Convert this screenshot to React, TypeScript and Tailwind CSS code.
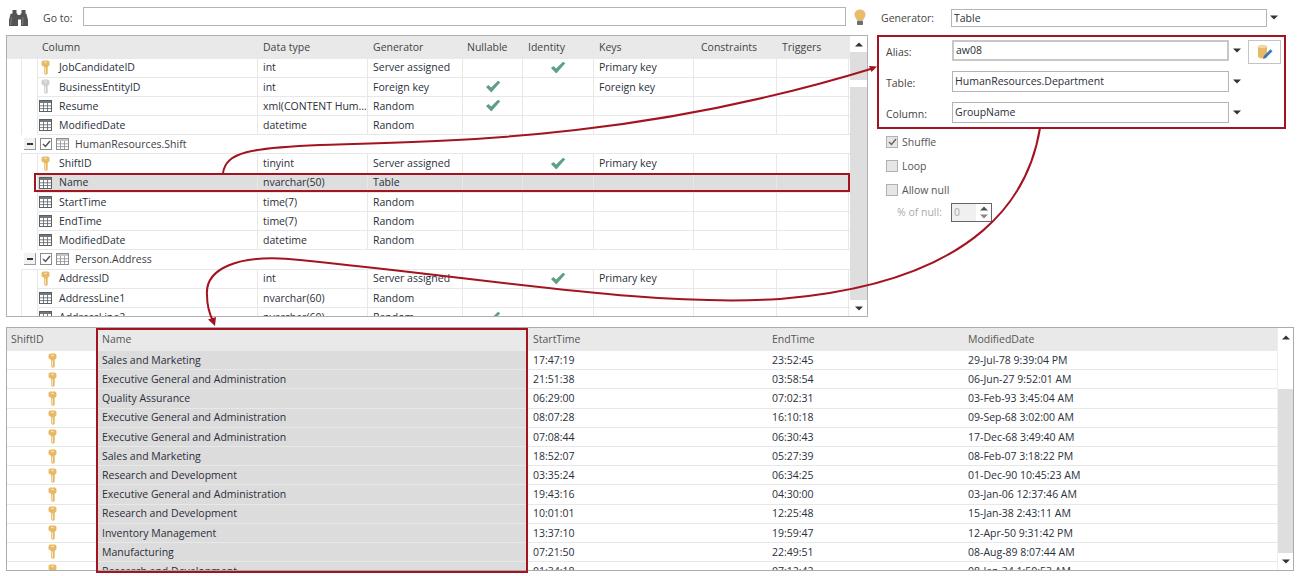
import React from "react";

const RED = "#a31420";

function Key({ color = "#e8b965" }: { color?: string }) {
  return (
    <svg width="9" height="15" viewBox="0 0 10 17" className="shrink-0">
      <path d="M2 0.500h6l1.500 1.500v4L7.500 8v7.500L5.500 17 3.500 15.500l0-7.500L0.500 6V2z" fill={color} />
      <rect x="3.500" y="2" width="3" height="1.600" fill="#fff" opacity="0.55" />
      <path d="M5 8.500v7" stroke="#fff" strokeWidth="0.9" opacity="0.8" />
    </svg>
  );
}

function TableIcon({ light = false }: { light?: boolean }) {
  const c = light ? "#8a8f93" : "#5a6166";
  return (
    <svg width="13" height="12" viewBox="0 0 13 12" className="shrink-0">
      <rect x="0.500" y="0.500" width="12" height="11" fill="#fff" stroke={c} />
      <rect x="0.500" y="0.500" width="12" height="2.500" fill={c} opacity={light ? 0.5 : 0.85} />
      <path d="M4.500 3v8M8.500 3v8M1 5.800h11M1 8.600h11" stroke={c} strokeWidth="0.8" />
    </svg>
  );
}

function Check() {
  return (
    <svg width="16" height="13" viewBox="0 0 16 13">
      <path d="M1 7l2.500-2 2.600 2.600L13 0.800l2.300 1.400L6.300 12.400z" fill="#5f9f88" />
    </svg>
  );
}

function Caret({ up = false, color = "#333" }: { up?: boolean; color?: string }) {
  return (
    <svg width="8" height="5" viewBox="0 0 8 5">
      <path d={up ? "M4 0.500L8 4.500H0z" : "M0 0.500h8L4 4.500z"} fill={color} />
    </svg>
  );
}

function Bulb() {
  return (
    <svg width="12" height="17" viewBox="0 0 12 17">
      <path d="M6 0.500c3 0 5.500 2.200 5.500 5.200 0 2.300-1.700 3.500-2.300 5.300H2.800C2.200 9.200 0.500 8 0.500 5.700 0.500 2.700 3 0.500 6 0.500z" fill="#eabb68" />
      <rect x="3" y="11.500" width="6" height="4.500" rx="0.800" fill="#6e6e6e" />
    </svg>
  );
}

function Binoculars() {
  return (
    <svg width="20" height="16" viewBox="0 0 20 16" className="shrink-0">
      <path d="M3.500 0h4v3.500h1V5h3V3.500h1V0h4v3.500l1 .5 1.500 6v6h-7V9.500h-3V16H0v-6l1.500-6 2-.5z" fill="#545454" />
      <path d="M2.500 7L1.500 15" stroke="#8a8a8a" strokeWidth="0.800" />
      <path d="M14 7L13.500 15" stroke="#8a8a8a" strokeWidth="0.800" />
    </svg>
  );
}

function DbEdit() {
  return (
    <svg width="16" height="16" viewBox="0 0 16 16">
      <path d="M1 2.500v10c0 1 1.800 1.800 4.500 1.800s4.500-.8 4.500-1.800v-10z" fill="#e8b965" />
      <ellipse cx="5.500" cy="2.500" rx="4.500" ry="1.700" fill="#f3d7a2" />
      <path d="M6 15l.8-3L13.500 5.300l2 2L8.800 14z" fill="#3b78b5" />
    </svg>
  );
}

type Mark = "gold" | "gray" | "table";
type Row = { n: string; m: Mark; t: string; g: string; nu?: boolean; id?: boolean; k?: string; sel?: boolean };
type Item = Row | { group: string };

const items: Item[] = [
  { n: "JobCandidateID", m: "gold", t: "int", g: "Server assigned", id: true, k: "Primary key" },
  { n: "BusinessEntityID", m: "gray", t: "int", g: "Foreign key", nu: true, k: "Foreign key" },
  { n: "Resume", m: "table", t: "xml(CONTENT Hum...", g: "Random", nu: true },
  { n: "ModifiedDate", m: "table", t: "datetime", g: "Random" },
  { group: "HumanResources.Shift" },
  { n: "ShiftID", m: "gold", t: "tinyint", g: "Server assigned", id: true, k: "Primary key" },
  { n: "Name", m: "table", t: "nvarchar(50)", g: "Table", sel: true },
  { n: "StartTime", m: "table", t: "time(7)", g: "Random" },
  { n: "EndTime", m: "table", t: "time(7)", g: "Random" },
  { n: "ModifiedDate", m: "table", t: "datetime", g: "Random" },
  { group: "Person.Address" },
  { n: "AddressID", m: "gold", t: "int", g: "Server assigned", id: true, k: "Primary key" },
  { n: "AddressLine1", m: "table", t: "nvarchar(60)", g: "Random" },
  { n: "AddressLine2", m: "table", t: "nvarchar(60)", g: "Random", nu: true },
];

const data = [
  ["Sales and Marketing", "17:47:19", "23:52:45", "29-Jul-78 9:39:04 PM"],
  ["Executive General and Administration", "21:51:38", "03:58:54", "06-Jun-27 9:52:01 AM"],
  ["Quality Assurance", "06:29:00", "07:02:31", "03-Feb-93 3:45:04 AM"],
  ["Executive General and Administration", "08:07:28", "16:10:18", "09-Sep-68 3:02:00 AM"],
  ["Executive General and Administration", "07:08:44", "06:30:43", "17-Dec-68 3:49:40 AM"],
  ["Sales and Marketing", "18:52:07", "05:27:39", "08-Feb-07 3:18:22 PM"],
  ["Research and Development", "03:35:24", "06:34:25", "01-Dec-90 10:45:23 AM"],
  ["Executive General and Administration", "19:43:16", "04:30:00", "03-Jan-06 12:37:46 AM"],
  ["Research and Development", "10:01:01", "12:25:48", "15-Jan-38 2:43:11 AM"],
  ["Inventory Management", "13:37:10", "19:59:47", "12-Apr-50 9:31:42 PM"],
  ["Manufacturing", "07:21:50", "22:49:51", "08-Aug-89 8:07:44 AM"],
  ["Research and Development", "01:34:18", "07:12:42", "08-Jan-34 1:50:53 AM"],
];

function Combo({ value, thick = false }: { value: string; thick?: boolean }) {
  return (
    <div className="flex items-center">
      <div className={`w-[277px] h-[21px] flex items-center px-[2px] bg-white ${thick ? "border-2 border-[#c8c8c8]" : "border border-[#b4b4b4]"} text-[#2a2f3a]`}>
        {value}
      </div>
      <div className="w-[15px] flex justify-center"><Caret /></div>
    </div>
  );
}

function Box({ on = false, label }: { on?: boolean; label: string }) {
  return (
    <div className="flex items-center h-[24px] text-[#555]">
      <div className="w-[12px] h-[12px] border border-[#b0b0b0] bg-[#e6e6e6] flex items-center justify-center">
        {on && (
          <svg width="9" height="8" viewBox="0 0 9 8"><path d="M1 4l2.500 2.500L8 1" fill="none" stroke="#666" strokeWidth="1.500" /></svg>
        )}
      </div>
      <span className="ml-[4px]">{label}</span>
    </div>
  );
}

const cellB = "h-full border-r border-[#e8e8e8] flex items-center whitespace-nowrap overflow-hidden";

function TopRow({ r }: { r: Row }) {
  return (
    <div className="flex h-[19.2px] shrink-0">
      <div className="w-[14px] shrink-0" />
      <div className="w-[16px] shrink-0 border-l border-[#e8e8e8]" />
      <div className={`relative flex flex-1 border-b border-[#e8e8e8] ${r.sel ? "bg-[#dedede]" : ""}`}>
        <div className="w-[221px] h-full border-x border-[#e8e8e8] flex items-center overflow-hidden">
          <div className="w-[15px] flex justify-center shrink-0">
            {r.m === "table" ? <TableIcon /> : <Key color={r.m === "gold" ? "#e8b965" : "#cfcfcf"} />}
          </div>
          <span className="ml-[6px]">{r.n}</span>
        </div>
        <div className={`${cellB} w-[110px] pl-[5px]`}>{r.t}</div>
        <div className={`${cellB} w-[95px] pl-[5px]`}>{r.g}</div>
        <div className={`${cellB} w-[60px] justify-center`}>{r.nu && <Check />}</div>
        <div className={`${cellB} w-[71px] justify-center`}>{r.id && <Check />}</div>
        <div className={`${cellB} w-[100px] pl-[5px]`}>{r.k}</div>
        <div className={`${cellB} w-[83px]`} />
        <div className={`${cellB} w-[72px]`} />
        {r.sel && <div className="absolute -left-[3px] right-0 -top-[1px] bottom-0 border-2 border-[#a31420]" />}
      </div>
    </div>
  );
}

function GroupRow({ name }: { name: string }) {
  return (
    <div className="flex h-[19.2px] shrink-0">
      <div className="w-[14px] shrink-0" />
      <div className="flex flex-1 items-center border-b border-[#e8e8e8] pl-[3px]">
        <div className="w-[12px] h-[12px] border-r border-b border-[#9a9a9a] bg-[#f2f2f2] flex items-center justify-center">
          <div className="w-[6px] h-[1.5px] bg-[#333]" />
        </div>
        <div className="ml-[4px] w-[12px] h-[12px] border border-[#8a8a8a] bg-white flex items-center justify-center">
          <svg width="9" height="8" viewBox="0 0 9 8"><path d="M1 4l2.500 2.500L8 1" fill="none" stroke="#555" strokeWidth="1.500" /></svg>
        </div>
        <div className="ml-[4px]"><TableIcon light /></div>
        <span className="ml-[6px] text-[#3a3f48]">{name}</span>
      </div>
    </div>
  );
}

function ScrollBtn({ up = false, h = "h-[16px]" }: { up?: boolean; h?: string }) {
  return (
    <div className={`${h} bg-white flex items-center justify-center shrink-0`}>
      <Caret up={up} color="#333" />
    </div>
  );
}

export default function App() {
  return (
    <div
      className="relative w-[1300px] h-[576px] overflow-hidden bg-white text-[10.5px] leading-none text-[#2a2f3a]"
      style={{ fontFamily: '"Open Sans", "Noto Sans", sans-serif' }}
    >
      <div className="flex pl-[6px]">
        {/* left */}
        <div className="w-[862px] shrink-0">
          <div className="h-[35px] flex items-start pt-[7px]">
            <div className="ml-[3px] mt-[3px]"><Binoculars /></div>
            <span className="ml-[14px] mt-[6px] w-[40px] text-[#444]">Go to:</span>
            <div className="w-[763px] h-[19px] border border-[#b4b4b4] bg-white" />
            <div className="ml-[8px] mt-[2px]"><Bulb /></div>
          </div>
          <div className="h-[282px] border border-[#b0b0b0] flex overflow-hidden">
            <div className="flex-1 flex flex-col min-w-0">
              <div className="h-[22.5px] shrink-0 bg-[#e9e9e9] flex items-center text-[#444]">
                <div className="w-[35px] shrink-0" />
                <div className="w-[221px]">Column</div>
                <div className="w-[110px]">Data type</div>
                <div className="w-[94px]">Generator</div>
                <div className="w-[61px]">Nullable</div>
                <div className="w-[71px]">Identity</div>
                <div className="w-[102px]">Keys</div>
                <div className="w-[81px]">Constraints</div>
                <div>Triggers</div>
              </div>
              {items.map((it, i) =>
                "group" in it ? <GroupRow key={i} name={it.group} /> : <TopRow key={i} r={it} />
              )}
            </div>
            <div className="w-[17px] shrink-0 bg-[#dedede] flex flex-col">
              <ScrollBtn up />
              <div className="mt-[28px] h-[7px] bg-white shrink-0" />
              <div className="flex-1" />
              <ScrollBtn />
            </div>
          </div>
        </div>
        {/* right */}
        <div className="ml-[9px] w-[409px] shrink-0">
          <div className="h-[35px] pt-[9px] flex items-start">
            <span className="ml-[4px] mt-[4px] w-[70px] text-[#444]">Generator:</span>
            <div className="w-[316px] h-[18px] border border-[#b4b4b4] flex items-center px-[2px]">Table</div>
            <div className="ml-[3px] mt-[6px]"><Caret /></div>
          </div>
          <div className="h-[94px] border-2 border-[#a31420] pl-[7px] pt-[3px] flex flex-col gap-[10px]">
            <div className="flex items-center h-[21px]">
              <span className="w-[66px] text-[#444] mt-[4px]">Alias:</span>
              <Combo value="aw08" thick />
              <div className="ml-[4px] w-[33px] h-[24px] mt-[2px] border border-[#c4c4c4] flex items-center justify-center"><DbEdit /></div>
            </div>
            <div className="flex items-center h-[21px]">
              <span className="w-[66px] text-[#444] mt-[3px]">Table:</span>
              <Combo value="HumanResources.Department" />
            </div>
            <div className="flex items-center h-[21px]">
              <span className="w-[66px] text-[#444] mt-[4px]">Column:</span>
              <Combo value="GroupName" />
            </div>
          </div>
          <div className="pl-[9px] pt-[1px]">
            <Box on label="Shuffle" />
            <Box label="Loop" />
            <Box label="Allow null" />
            <div className="flex items-center h-[19px] mt-[1px]">
              <span className="ml-[11px] w-[54px] text-[#aaa]">% of null:</span>
              <div className="w-[41px] h-[19px] border border-[#666] flex">
                <div className="w-[24px] bg-[#f0f0f0] text-[#aaa] flex items-center pl-[2px]">0</div>
                <div className="flex-1 flex flex-col items-center justify-center gap-[3px]">
                  <Caret up color="#555" />
                  <Caret color="#888" />
                </div>
              </div>
            </div>
          </div>
        </div>
      </div>

      {/* bottom grid */}
      <div className="relative ml-[6px] mt-[10px] w-[1288px] h-[244px] border border-[#ababab] flex overflow-hidden">
        <div className="flex-1 flex flex-col min-w-0">
          <div className="h-[23px] shrink-0 bg-[#e9e9e9] flex items-center text-[#555]">
            <div className="w-[90px] pl-[4px]">ShiftID</div>
            <div className="w-[431px] pl-[5px]">Name</div>
            <div className="w-[239px] pl-[5px]">StartTime</div>
            <div className="w-[196px] pl-[5px]">EndTime</div>
            <div className="pl-[5px]">ModifiedDate</div>
          </div>
          {data.map((d, i) => (
            <div key={i} className="flex h-[19.2px] shrink-0 border-b border-[#e8e8e8]">
              <div className="w-[90px] flex justify-center items-center"><Key /></div>
              <div className="w-[431px] bg-[#dcdcdc] pl-[5px] flex items-center">{d[0]}</div>
              <div className="w-[239px] pl-[5px] flex items-center">{d[1]}</div>
              <div className="w-[196px] pl-[5px] flex items-center">{d[2]}</div>
              <div className="pl-[5px] flex items-center">{d[3]}</div>
            </div>
          ))}
        </div>
        <div className="w-[16px] shrink-0 bg-[#dedede] flex flex-col border-l border-[#eee]">
          <div className="h-[61px] bg-white flex justify-center pt-[7px] shrink-0"><Caret up /></div>
          <div className="flex-1" />
          <ScrollBtn h="h-[17px]" />
        </div>
      </div>

      {/* annotation overlays */}
      <div className="absolute left-[96px] top-[328px] w-[432px] h-[245px] border-2 border-[#a31420]" />
      <svg className="absolute left-0 top-0 pointer-events-none" width="1300" height="576" viewBox="0 0 1300 576">
        <path d="M223 173C226 152 250 148 320 145C450 141 640 140 874 68" fill="none" stroke={RED} strokeWidth="2" />
        <path d="M877 66.500L869 66L871.500 72z" fill={RED} />
        <path d="M1040 128C1030 190 985 282 780 299C650 307 500 280 300 260C235 253 205 270 207 295C207 305 210 315 213 321" fill="none" stroke={RED} strokeWidth="2" />
        <path d="M215 326L208 319.500L216 317z" fill={RED} />
      </svg>
    </div>
  );
}
